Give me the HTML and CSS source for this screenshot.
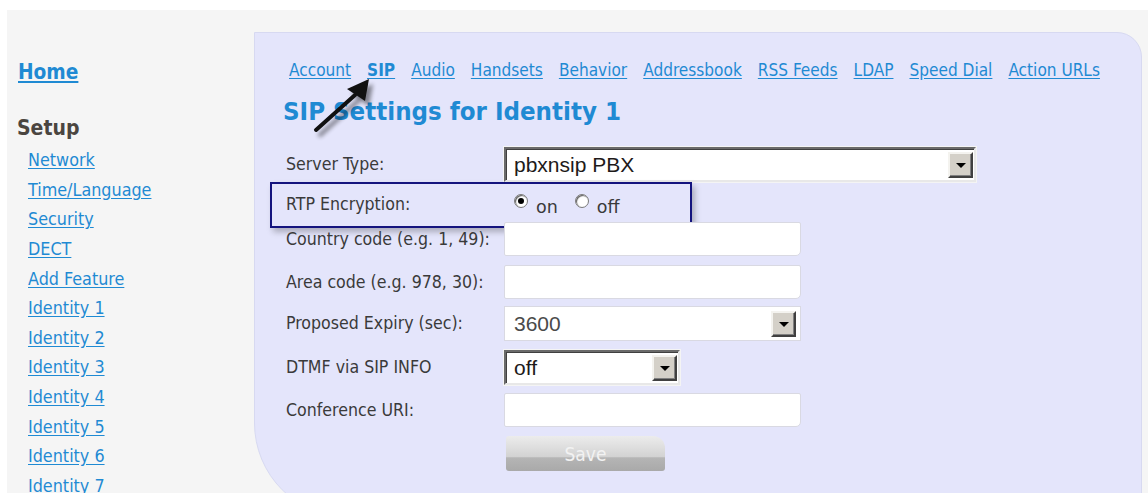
FILE: index.html
```html
<!DOCTYPE html>
<html lang="en">
<head>
<meta charset="utf-8">
<title>SIP Settings</title>
<link rel="stylesheet" href="styles.css">
</head>
<body>
<div class="page">
  <aside class="sidebar">
    <a class="home" href="#">Home</a>
    <h2 class="section">Setup</h2>
    <nav class="side-links">
      <a href="#">Network</a>
      <a href="#">Time/Language</a>
      <a href="#">Security</a>
      <a href="#">DECT</a>
      <a href="#">Add Feature</a>
      <a href="#">Identity 1</a>
      <a href="#">Identity 2</a>
      <a href="#">Identity 3</a>
      <a href="#">Identity 4</a>
      <a href="#">Identity 5</a>
      <a href="#">Identity 6</a>
      <a href="#">Identity 7</a>
    </nav>
  </aside>

  <main class="panel">
    <nav class="tabs">
      <a href="#">Account</a>
      <a href="#" class="current">SIP</a>
      <a href="#">Audio</a>
      <a href="#">Handsets</a>
      <a href="#">Behavior</a>
      <a href="#">Addressbook</a>
      <a href="#">RSS Feeds</a>
      <a href="#">LDAP</a>
      <a href="#">Speed Dial</a>
      <a href="#">Action URLs</a>
    </nav>

    <h1 class="title">SIP Settings for Identity 1</h1>

    <form class="form">
      <div class="row row-server">
        <label>Server Type:</label>
        <div class="combo combo-sunken combo-wide">
          <span class="combo-value">pbxnsip PBX</span>
          <span class="combo-btn"><i></i></span>
        </div>
      </div>

      <div class="row row-rtp">
        <label>RTP Encryption:</label>
        <div class="radios">
          <span class="radio checked"></span><span class="radio-text">on</span>
          <span class="radio"></span><span class="radio-text">off</span>
        </div>
        <div class="highlight"></div>
      </div>

      <div class="row row-country">
        <label>Country code (e.g. 1, 49):</label>
        <span class="field"></span>
      </div>

      <div class="row row-area">
        <label>Area code (e.g. 978, 30):</label>
        <span class="field"></span>
      </div>

      <div class="row row-expiry">
        <label>Proposed Expiry (sec):</label>
        <div class="combo combo-flat">
          <span class="combo-value muted">3600</span>
          <span class="combo-btn"><i></i></span>
        </div>
      </div>

      <div class="row row-dtmf">
        <label>DTMF via SIP INFO</label>
        <div class="combo combo-sunken combo-short">
          <span class="combo-value">off</span>
          <span class="combo-btn"><i></i></span>
        </div>
      </div>

      <div class="row row-conf">
        <label>Conference URI:</label>
        <span class="field"></span>
      </div>

      <div class="row row-save">
        <span></span>
        <button type="button" class="save">Save</button>
      </div>
    </form>

    <svg class="pointer" width="90" height="70" viewBox="0 0 90 70" aria-hidden="true">
      <defs>
        <filter id="soft" x="-30%" y="-30%" width="160%" height="160%">
          <feGaussianBlur stdDeviation="2.2"/>
        </filter>
      </defs>
      <g transform="translate(4 5)" filter="url(#soft)" opacity="0.45">
        <line x1="15" y1="57" x2="54" y2="22" stroke="#000" stroke-width="4" stroke-linecap="round"/>
        <polygon points="68,6 46,16 64,28" fill="#000"/>
      </g>
      <line x1="15" y1="57" x2="54" y2="22" stroke="#111" stroke-width="4" stroke-linecap="round"/>
      <polygon points="68,6 46,16 64,28" fill="#111"/>
    </svg>
  </main>
</div>
</body>
</html>
```

FILE: styles.css
```css
html, body {
  margin: 0;
  padding: 0;
  background: #ffffff;
  overflow: hidden;
}

body {
  font-family: "DejaVu Sans", "Liberation Sans", sans-serif;
  font-stretch: condensed;
  color: #333;
}

a {
  color: #1f8ad3;
  text-decoration: underline;
  text-underline-offset: 2px;
}

.page {
  display: flex;
  margin: 10px 0 0 7px;
  height: 483px;
  overflow: hidden;
  background: #f5f5f5;
}

/* left navigation column */
.sidebar {
  width: 247px;
  flex: none;
  display: flex;
  flex-direction: column;
  padding: 49px 0 0 11px;
  box-sizing: border-box;
}

.home {
  font-size: 20.7px;
  font-weight: bold;
  line-height: 26px;
  align-self: flex-start;
}

.section {
  margin: 30px 0 0 -1px;
  font-size: 21px;
  font-weight: bold;
  line-height: 26px;
  color: #4a4540;
}

.side-links {
  display: flex;
  flex-direction: column;
  align-items: flex-start;
  padding: 9px 0 0 10px;
  gap: 9.64px;
}

.side-links a {
  font-size: 17.8px;
  line-height: 20px;
}

/* content panel */
.panel {
  position: relative;
  flex: 1;
  margin: 22px 6px 0 0;
  height: 486px;
  flex-shrink: 0;
  background: #e4e5fb;
  border: 1px solid #d7d9f1;
  border-radius: 0 25px 0 95px;
  padding: 27px 0 0 34px;
  box-sizing: border-box;
}

.tabs {
  display: flex;
  gap: 16px;
  font-size: 17.1px;
  line-height: 20px;
}

.tabs .current {
  font-weight: bold;
}

.title {
  margin: 15px 0 0 -6px;
  font-size: 25.6px;
  font-weight: bold;
  line-height: 32px;
  color: #1f8ad3;
}

.form {
  margin: 20px 0 0 -3px;
  display: flex;
  flex-direction: column;
}

.row {
  position: relative;
  display: grid;
  grid-template-columns: 218px auto;
  align-items: start;
  justify-items: start;
}

.row label {
  font-size: 17.6px;
  line-height: 34px;
  color: #3a3a3a;
}

.row-server { height: 35px; }
.row-rtp { height: 40px; }
.row-country { height: 43px; }
.row-area { height: 41px; }
.row-expiry { height: 44px; }
.row-dtmf { height: 43px; }
.row-conf { height: 43px; }
.row-save { height: 40px; }

.row-rtp label { line-height: 44px; }

/* text fields */
.field {
  width: 297px;
  height: 34px;
  box-sizing: border-box;
  background: #fff;
  border: 1px solid #d9d9e2;
  border-radius: 2px 2px 5px 2px;
}

/* dropdowns */
.combo {
  display: flex;
  align-items: center;
  box-sizing: border-box;
  background: #fff;
  font-family: "Liberation Sans", Arial, sans-serif;
  font-stretch: normal;
  font-size: 21px;
  color: #1e1a1a;
}

.combo-value {
  flex: 1;
  padding-left: 8px;
}

.combo-value.muted {
  color: #4a4a4a;
  padding-left: 9px;
}

.combo-sunken {
  height: 35px;
  border: 2px solid;
  border-color: #6a6a6a #e8e8e8 #e8e8e8 #6a6a6a;
  box-shadow: inset 1px 1px 0 #404040, 0 0 0 1px #f4f4f4;
  padding-right: 1px;
}

.combo-wide { width: 472px; }
.combo-short { width: 176px; }

.combo-flat {
  width: 297px;
  height: 35px;
  border: 1px solid #d9d9e2;
  padding-right: 4px;
}

.combo-btn {
  width: 25px;
  height: 26px;
  box-sizing: border-box;
  background: #d4d0c8;
  border: 2px solid;
  border-color: #f4f3ef #404040 #404040 #f4f3ef;
  box-shadow: inset -1px -1px 0 #808080;
  display: flex;
  align-items: center;
  justify-content: center;
}

.combo-btn i {
  width: 0;
  height: 0;
  border-left: 5px solid transparent;
  border-right: 5px solid transparent;
  border-top: 5px solid #000;
  margin-top: 1px;
}

/* radio group */
.radios {
  display: flex;
  align-items: center;
  height: 44px;
  padding-left: 10px;
  font-size: 17.5px;
  font-stretch: normal;
  color: #3a3a3a;
}

.radio {
  width: 14px;
  height: 14px;
  box-sizing: border-box;
  border-radius: 50%;
  background: #fff;
  border: 1px solid #7a7a7a;
  box-shadow: inset 1px 1px 1px #5a5a5a;
  position: relative;
  margin-top: -6px;
}

.radio.checked::after {
  content: "";
  position: absolute;
  left: 3px;
  top: 3px;
  width: 6px;
  height: 6px;
  border-radius: 50%;
  background: #000;
}

.radio-text {
  margin: 6px 17px 0 8px;
}

.highlight {
  position: absolute;
  left: -16px;
  top: 0;
  width: 422px;
  height: 46px;
  box-sizing: border-box;
  border: 2px solid #14147e;
  box-shadow: 3px 4px 6px rgba(0, 0, 0, 0.25);
  pointer-events: none;
}

/* save button */
.save {
  margin-left: 2px;
  width: 159px;
  height: 35px;
  border: none;
  border-radius: 3px 12px 3px 3px;
  background: linear-gradient(#ececec, #d2d2d2 60%, #b5b5b5 62%, #a9a9a9);
  color: #f2f2f2;
  font-family: inherit;
  font-stretch: inherit;
  font-size: 19px;
}

/* callout arrow pointing at the active tab */
.pointer {
  position: absolute;
  left: 46px;
  top: 40px;
}
```
